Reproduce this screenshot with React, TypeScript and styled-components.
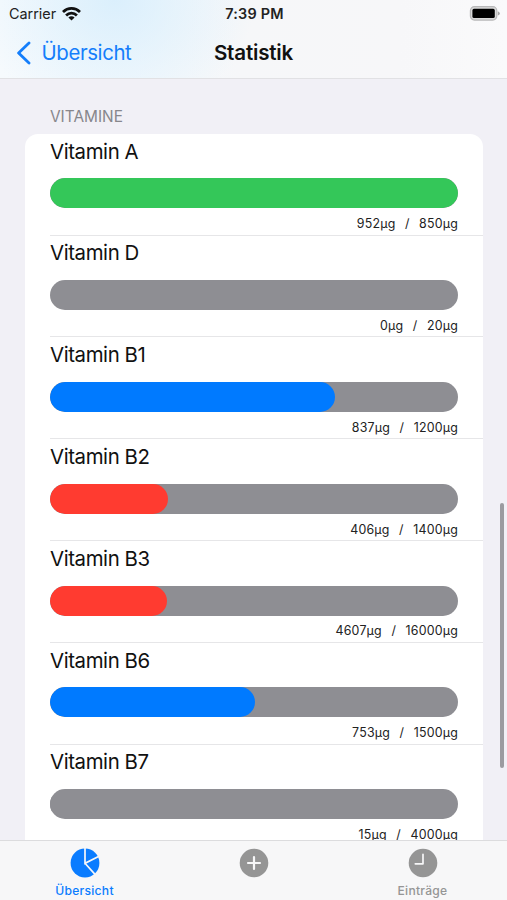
import React from "react";
import styled, { createGlobalStyle } from "styled-components";

const GlobalStyle = createGlobalStyle`
  html, body { margin: 0; padding: 0; }
  body {
    background: #f1f0f6;
    font-family: Inter, "Liberation Sans", sans-serif;
    color: #111;
    overflow: hidden;
  }
  * { box-sizing: border-box; }
`;

const Screen = styled.div`
  width: 507px;
  height: 900px;
  display: flex;
  flex-direction: column;
  position: relative;
  overflow: hidden;
  background: #f1f0f6;
`;

const Header = styled.header`
  flex: none;
  height: 79px;
  border-bottom: 1px solid #e1e1e4;
  background:
    radial-gradient(ellipse 140px 120px at 115px 0, rgba(216, 238, 252, 0.9), rgba(216, 238, 252, 0) 100%),
    linear-gradient(90deg, #f6fafd 0, #f3f9fd 130px, #f6f7f9 240px, #f7f7f9 400px, #fafafb 507px);
`;

const StatusBar = styled.div`
  display: grid;
  grid-template-columns: 1fr auto 1fr;
  align-items: center;
  height: 27px;
  padding: 0 7px 0 9px;
`;

const Carrier = styled.div`
  display: flex;
  align-items: center;
  gap: 6px;
  font-size: 14.4px;
  letter-spacing: -0.02px;
  color: #222;
`;

const Clock = styled.div`
  font-size: 14.4px;
  font-weight: 600;
  letter-spacing: 0.25px;
  color: #222;
`;

const Battery = styled.svg`
  justify-self: end;
  display: block;
`;

const NavBar = styled.nav`
  display: grid;
  grid-template-columns: 1fr auto 1fr;
  align-items: center;
  height: 51px;
  padding: 0 16px;
`;

const BackLink = styled.a`
  display: flex;
  align-items: center;
  gap: 10.5px;
  color: #147efb;
  font-size: 20.4px;
  letter-spacing: -0.38px;
`;

const Title = styled.h1`
  margin: 0;
  font-size: 20.6px;
  font-weight: 600;
  letter-spacing: -0.2px;
  color: #111;
`;

const Content = styled.main`
  flex: 1;
  min-height: 0;
  overflow: hidden;
  padding: 0 24.5px 0 25px;
`;

const SectionTitle = styled.h2`
  margin: 0;
  height: 54.8px;
  padding: 28px 0 0 25px;
  font-size: 15.4px;
  line-height: 20px;
  font-weight: 400;
  letter-spacing: 0;
  color: #87878c;
`;

const Card = styled.section`
  background: #fff;
  border-radius: 13px;
  height: 900px;
`;

const Row = styled.article`
  display: flex;
  flex-direction: column;
  height: 101.8px;
  margin-left: 25px;
  padding: 4.8px 24.5px 0 0;
  border-bottom: 1px solid #e6e6e8;
`;

const Name = styled.div`
  height: 26px;
  line-height: 26px;
  font-size: 20.4px;
  letter-spacing: -0.4px;
`;

const Track = styled.div`
  flex: none;
  height: 30px;
  margin-top: 13.8px;
  border-radius: 15px;
  overflow: hidden;
  background: #8e8e93;
`;

const Fill = styled.div<{ $color: string }>`
  height: 100%;
  border-radius: 15px;
  background: ${(p) => p.$color};
`;

const Amounts = styled.div`
  display: flex;
  justify-content: flex-end;
  gap: 9.5px;
  margin-top: 7.8px;
  line-height: 16px;
  font-size: 12.4px;
  letter-spacing: 0.2px;
  color: #222;
`;

const ScrollThumb = styled.div`
  position: absolute;
  right: 3.5px;
  top: 503px;
  width: 3.7px;
  height: 265px;
  border-radius: 2px;
  background: #9b9ba0;
`;

const TabBar = styled.footer`
  flex: none;
  display: grid;
  grid-template-columns: repeat(3, 1fr);
  height: 60px;
  border-top: 1px solid #dcdcde;
  background: #f7f7f8;
`;

const Tab = styled.div<{ $active?: boolean }>`
  display: flex;
  flex-direction: column;
  align-items: center;
  padding-top: 7px;
  gap: 5px;
  font-size: 12.1px;
  line-height: 16px;
  font-weight: 500;
  letter-spacing: 0.27px;
  color: ${(p) => (p.$active ? "#0a7cff" : "#959595")};
`;

const TabIcon = styled.svg`
  display: block;
`;

const GREEN = "#34c759";
const BLUE = "#007aff";
const RED = "#ff3b30";

const vitamins = [
  { name: "Vitamin A", value: 952, goal: 850, color: GREEN },
  { name: "Vitamin D", value: 0, goal: 20, color: RED },
  { name: "Vitamin B1", value: 837, goal: 1200, color: BLUE },
  { name: "Vitamin B2", value: 406, goal: 1400, color: RED },
  { name: "Vitamin B3", value: 4607, goal: 16000, color: RED },
  { name: "Vitamin B6", value: 753, goal: 1500, color: BLUE },
  { name: "Vitamin B7", value: 15, goal: 4000, color: "#8e8e93" },
];

export default function App() {
  return (
    <Screen>
      <GlobalStyle />
      <Header>
        <StatusBar>
          <Carrier>
            Carrier
            <svg width="19" height="14" viewBox="0 0 19 14" fill="none" stroke="#111" strokeWidth="2.8">
              <path d="M1 4.9a12.2 12.2 0 0 1 17 0" />
              <path d="M4.1 8.4a7.7 7.7 0 0 1 10.8 0" />
              <path d="M9.5 13.6 6.4 10.6a4.4 4.4 0 0 1 6.2 0z" fill="#111" stroke="none" />
            </svg>
          </Carrier>
          <Clock>7:39 PM</Clock>
          <Battery width="31" height="15" viewBox="0 0 31 15">
            <rect x="1.4" y="0.7" width="26.4" height="13.4" rx="4" fill="#dadada" stroke="#b8b8b9" strokeWidth="1.2" />
            <rect x="3.4" y="2.8" width="22.4" height="9.2" rx="1.6" fill="#000" />
            <path d="M28.8 5.2q2 .8 2 2.2t-2 2.2z" fill="#a5a5a6" />
          </Battery>
        </StatusBar>
        <NavBar>
          <BackLink>
            <svg width="15" height="24" viewBox="0 0 15 24" fill="none" stroke="#147efb" strokeWidth="2.8" strokeLinecap="round" strokeLinejoin="round">
              <path d="M13 1.9 2.6 12 13 22.1" />
            </svg>
            Übersicht
          </BackLink>
          <Title>Statistik</Title>
        </NavBar>
      </Header>
      <Content>
        <SectionTitle>VITAMINE</SectionTitle>
        <Card>
          {vitamins.map((v) => (
            <Row key={v.name}>
              <Name>{v.name}</Name>
              <Track>
                <Fill $color={v.color} style={{ width: `${Math.min(100, (v.value / v.goal) * 100)}%` }} />
              </Track>
              <Amounts>
                <span>{v.value}µg</span>
                <span>/</span>
                <span>{v.goal}µg</span>
              </Amounts>
            </Row>
          ))}
        </Card>
      </Content>
      <TabBar>
        <Tab $active>
          <TabIcon width="30" height="30" viewBox="0 0 30 30">
            <circle cx="15" cy="15" r="14.4" fill="#0a7cff" />
            <path d="M15 0V15.3L28.5 8.4M15 15.3 25 26.4" fill="none" stroke="#f7f7f8" strokeWidth="1.7" />
          </TabIcon>
          Übersicht
        </Tab>
        <Tab>
          <TabIcon width="30" height="30" viewBox="0 0 30 30">
            <circle cx="15" cy="15" r="14.3" fill="#959595" />
            <path d="M15 9v12M9 15h12" stroke="#f7f7f8" strokeWidth="2.2" strokeLinecap="round" />
          </TabIcon>
        </Tab>
        <Tab>
          <TabIcon width="30" height="30" viewBox="0 0 30 30">
            <circle cx="15" cy="15" r="14.3" fill="#959595" />
            <path d="M15 6.3V15.8H7.3" fill="none" stroke="#f7f7f8" strokeWidth="1.7" strokeLinecap="round" strokeLinejoin="round" />
          </TabIcon>
          Einträge
        </Tab>
      </TabBar>
      <ScrollThumb />
    </Screen>
  );
}
